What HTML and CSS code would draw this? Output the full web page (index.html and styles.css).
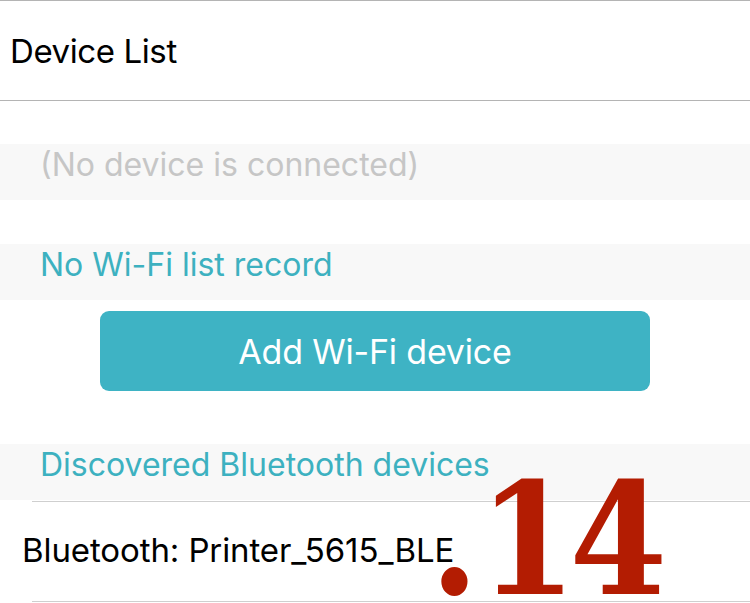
FILE: index.html
```html
<!DOCTYPE html>
<html lang="en">
<head>
<meta charset="utf-8">
<title>Device List</title>
<link rel="stylesheet" href="styles.css">
</head>
<body>
<div class="screen">
  <header class="header">
    <h1 class="title">Device List</h1>
  </header>
  <section class="band band-first">
    <span class="muted">(No device is connected)</span>
  </section>
  <section class="band band-wifi">
    <span class="accent">No Wi-Fi list record</span>
  </section>
  <div class="action">
    <button class="btn">Add Wi-Fi device</button>
  </div>
  <section class="band band-bt">
    <span class="accent">Discovered Bluetooth devices</span>
  </section>
  <ul class="devices">
    <li class="device"><span class="device-name">Bluetooth: Printer_5615_BLE</span></li>
  </ul>
  <div class="stamp"><span class="stamp-dot">.</span>14</div>
</div>
</body>
</html>
```

FILE: styles.css
```css
* { box-sizing: border-box; }
html, body { margin: 0; padding: 0; background: #ffffff; }
body {
  width: 750px;
  height: 603px;
  overflow: hidden;
  font-family: Inter, "Noto Sans", sans-serif;
}
.screen {
  position: relative;
  display: flex;
  flex-direction: column;
  width: 750px;
  height: 603px;
}
.header {
  height: 101px;
  border-top: 1px solid #b4b4b4;
  border-bottom: 1px solid #b4b4b4;
  display: flex;
  align-items: center;
  padding-left: 10px;
}
.title {
  margin: 0;
  font-weight: 400;
  font-size: 33px;
  color: #000;
  letter-spacing: -0.4px;
}
.band {
  height: 56px;
  background: #f8f8f8;
  display: flex;
  align-items: flex-start;
  padding-left: 40px;
  padding-top: 5px;
  font-size: 32px;
  line-height: 32px;
  letter-spacing: 0;
}
.band-first { margin-top: 43px; }
.band-wifi { margin-top: 44px; }
.band-bt { margin-top: 53px; }
.muted { color: #c6c6c6; }
.accent { color: #3db1c0; }
.action {
  margin-top: 11px;
  padding-left: 100px;
}
.btn {
  width: 550px;
  height: 80px;
  border: 0;
  border-radius: 9px;
  background: #3eb3c4;
  color: #ffffff;
  font-family: Inter, "Noto Sans", sans-serif;
  font-size: 34px;
  letter-spacing: -0.2px;
  display: flex;
  align-items: center;
  justify-content: center;
  padding: 0;
}
.devices {
  list-style: none;
  margin: 1px 0 0 32px;
  padding: 0;
  border-top: 1px solid #cfcfcf;
}
.device {
  height: 100px;
  border-bottom: 1px solid #cfcfcf;
  display: flex;
  align-items: center;
  padding-bottom: 4px;
  font-size: 33px;
  letter-spacing: -0.1px;
  color: #000;
}
.device-name { margin-left: -10px; }
.stamp {
  position: absolute;
  left: 430px;
  top: 462px;
  font-family: "DejaVu Serif", serif;
  font-weight: 700;
  font-stretch: condensed;
  font-size: 156px;
  line-height: 1;
  letter-spacing: -7px;
  color: #b31c02;
}
.stamp-dot { letter-spacing: 0; }
```
